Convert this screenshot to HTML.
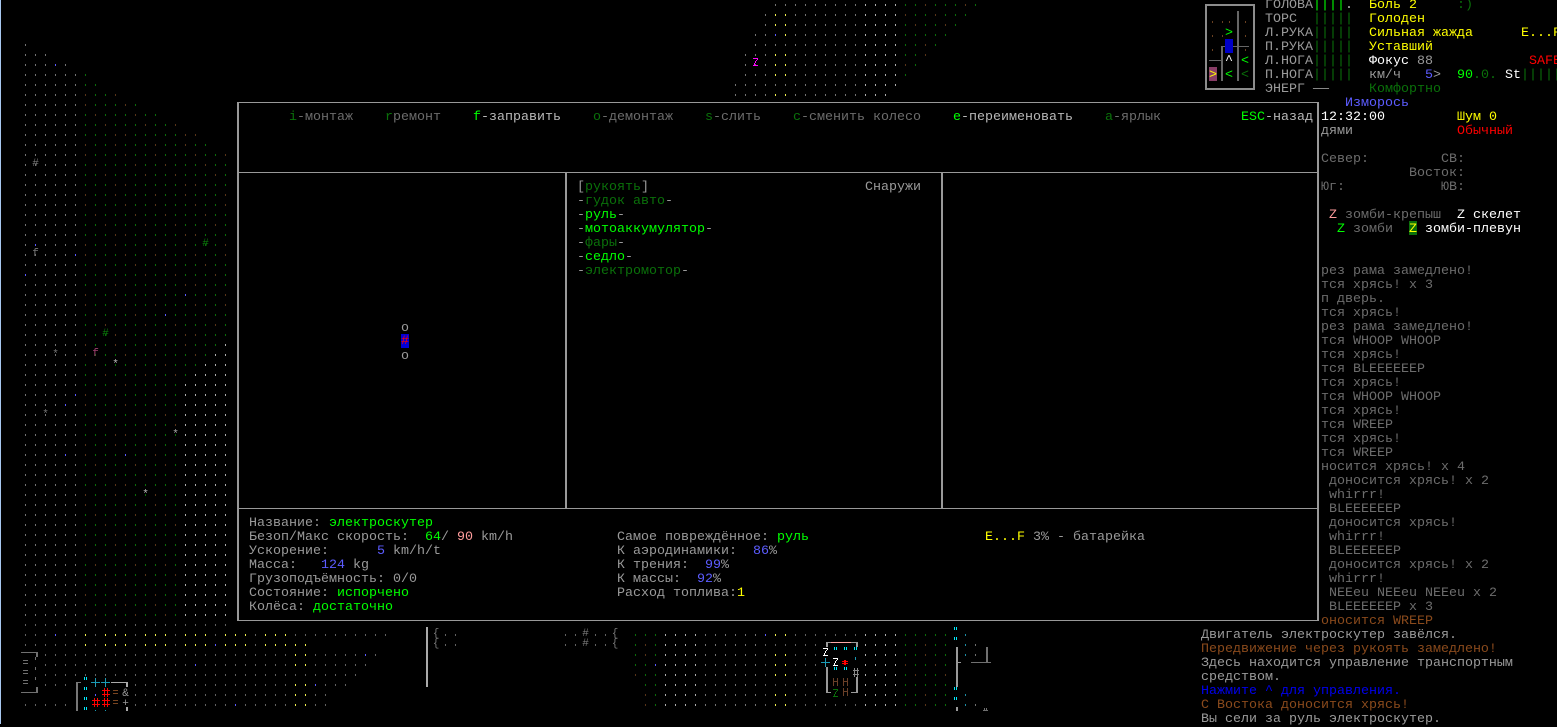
<!DOCTYPE html>
<html lang="ru">
<head>
<meta charset="utf-8">
<title>Cataclysm</title>
<style>
html,body{margin:0;padding:0;background:#000;}
body{width:1557px;height:724px;overflow:hidden;position:relative;font:13.333px/14px "Liberation Mono","DejaVu Sans Mono",monospace;color:#9a9a9a;}
svg{position:absolute;left:0;top:0;}
.l{position:absolute;white-space:pre;height:14px;line-height:14px;margin-top:2px;}
.d{color:#6c6c6c}.m{color:#9a9a9a}.a{color:#b8b8b8}.w{color:#fff}.g{color:#00ff00}.n{color:#0a700a}.y{color:#ffff00}.b{color:#5c5cff}.r{color:#ff0000}.p{color:#ff9c9c}.o{color:#8a4a1c}.u{color:#0000ee}
</style>
</head>
<body>
<svg width="1557" height="724" viewBox="0 0 1557 724" shape-rendering="crispEdges">
<defs>
<pattern id="pG" width="10" height="10" patternUnits="userSpaceOnUse"><rect x="5" y="4" width="1" height="2" fill="#747474"/></pattern>
<pattern id="pD" width="10" height="10" patternUnits="userSpaceOnUse"><rect x="5" y="4" width="1" height="2" fill="#626262"/></pattern>
<pattern id="pL" width="10" height="10" patternUnits="userSpaceOnUse"><rect x="5" y="4" width="1" height="2" fill="#b0b0b0"/></pattern>
<pattern id="pY" width="10" height="10" patternUnits="userSpaceOnUse"><rect x="5" y="4" width="1" height="2" fill="#f4f450"/></pattern>
<pattern id="pB" width="10" height="10" patternUnits="userSpaceOnUse"><rect x="5" y="4" width="1" height="2" fill="#5c5cff"/></pattern>
<pattern id="pC" width="10" height="10" patternUnits="userSpaceOnUse"><rect x="5" y="4" width="1" height="2" fill="#1c8ea8"/></pattern>
<pattern id="pM" width="70" height="50" patternUnits="userSpaceOnUse">
<g fill="#0b6e0b">
<rect x="5" y="4" width="1" height="2"/><rect x="25" y="4" width="1" height="2"/><rect x="35" y="4" width="1" height="2"/><rect x="45" y="4" width="1" height="2"/><rect x="65" y="4" width="1" height="2"/>
<rect x="5" y="14" width="1" height="2"/><rect x="15" y="14" width="1" height="2"/><rect x="35" y="14" width="1" height="2"/><rect x="45" y="14" width="1" height="2"/><rect x="55" y="14" width="1" height="2"/>
<rect x="15" y="24" width="1" height="2"/><rect x="25" y="24" width="1" height="2"/><rect x="45" y="24" width="1" height="2"/><rect x="55" y="24" width="1" height="2"/><rect x="65" y="24" width="1" height="2"/>
<rect x="5" y="34" width="1" height="2"/><rect x="15" y="34" width="1" height="2"/><rect x="25" y="34" width="1" height="2"/><rect x="35" y="34" width="1" height="2"/><rect x="65" y="34" width="1" height="2"/>
<rect x="5" y="44" width="1" height="2"/><rect x="25" y="44" width="1" height="2"/><rect x="35" y="44" width="1" height="2"/><rect x="55" y="44" width="1" height="2"/><rect x="65" y="44" width="1" height="2"/>
</g>
<g fill="#5a3418">
<rect x="15" y="4" width="1" height="2"/><rect x="55" y="4" width="1" height="2"/>
<rect x="25" y="14" width="1" height="2"/><rect x="65" y="14" width="1" height="2"/>
<rect x="5" y="24" width="1" height="2"/><rect x="35" y="24" width="1" height="2"/>
<rect x="45" y="34" width="1" height="2"/><rect x="55" y="34" width="1" height="2"/>
<rect x="15" y="44" width="1" height="2"/><rect x="45" y="44" width="1" height="2"/>
</g>
</pattern>
</defs>

<rect x="0" y="0" width="1" height="724" fill="#a8c8f0"/>

<!-- left map -->
<polygon fill="url(#pG)" points="20,40 30,40 30,50 50,50 50,60 70,60 70,70 80,70 80,630 20,630"/>
<polygon fill="url(#pM)" points="80,70 90,70 90,80 100,80 100,90 120,90 120,100 140,100 140,110 160,110 160,120 180,120 180,130 200,130 200,140 210,140 210,150 230,150 230,620 80,620"/>
<polygon fill="#000" points="220,340 230,340 230,620 180,620 180,380 190,380 190,370 200,370 200,360 210,360 210,350 220,350"/>
<polygon fill="url(#pL)" points="220,340 230,340 230,620 180,620 180,380 190,380 190,370 200,370 200,360 210,360 210,350 220,350"/>
<rect x="80" y="620" width="150" height="10" fill="url(#pG)"/>
<g fill="#5c5cff">
<rect x="55" y="64" width="1" height="2"/><rect x="35" y="244" width="1" height="2"/><rect x="75" y="254" width="1" height="2"/><rect x="25" y="274" width="1" height="2"/><rect x="185" y="294" width="1" height="2"/><rect x="165" y="314" width="1" height="2"/><rect x="75" y="394" width="1" height="2"/><rect x="65" y="404" width="1" height="2"/><rect x="65" y="454" width="1" height="2"/><rect x="125" y="454" width="1" height="2"/>
</g>

<!-- top map -->
<polygon fill="url(#pG)" points="770,0 860,0 860,100 730,100 730,80 740,80 740,50 750,50 750,30 760,30 760,10 770,10"/>
<rect x="860" y="0" width="40" height="90" fill="url(#pL)"/>
<rect x="860" y="90" width="30" height="10" fill="url(#pL)"/>
<polygon fill="url(#pM)" points="900,0 980,0 980,10 970,10 970,20 960,20 960,30 950,30 950,40 940,40 940,50 930,50 930,60 920,60 920,70 910,70 910,80 900,80"/>
<rect x="770" y="10" width="20" height="20" fill="#000"/><rect x="770" y="10" width="20" height="20" fill="url(#pY)"/>
<rect x="770" y="30" width="20" height="10" fill="#000"/><rect x="780" y="30" width="10" height="10" fill="url(#pY)"/><rect x="770" y="30" width="10" height="10" fill="url(#pB)"/>
<rect x="770" y="50" width="20" height="30" fill="#000"/><rect x="770" y="50" width="20" height="30" fill="url(#pY)"/>
<rect x="770" y="90" width="20" height="10" fill="#000"/><rect x="770" y="90" width="20" height="10" fill="url(#pY)"/>

<!-- bottom-left map -->
<g fill="url(#pD)">
<rect x="20" y="620" width="210" height="10"/>
<rect x="20" y="630" width="370" height="10"/>
<rect x="20" y="640" width="290" height="10"/>
<rect x="40" y="650" width="340" height="10"/>
<rect x="40" y="660" width="330" height="10"/>
<rect x="40" y="670" width="320" height="10"/>
<rect x="40" y="680" width="30" height="10"/><rect x="130" y="680" width="220" height="10"/>
<rect x="130" y="690" width="200" height="10"/>
<rect x="20" y="700" width="50" height="10"/><rect x="130" y="700" width="200" height="10"/>
</g>
<rect x="20" y="620" width="210" height="20" fill="#000"/>
<rect x="20" y="620" width="210" height="10" fill="url(#pD)"/>
<rect x="20" y="630" width="370" height="10" fill="#000"/>
<rect x="20" y="630" width="370" height="10" fill="url(#pD)"/>
<g id="ybl">
<rect x="80" y="630" width="10" height="20" fill="#000"/><rect x="80" y="630" width="10" height="20" fill="url(#pY)"/>
<rect x="100" y="630" width="30" height="20" fill="#000"/><rect x="100" y="630" width="30" height="20" fill="url(#pY)"/>
<rect x="140" y="630" width="30" height="20" fill="#000"/><rect x="140" y="630" width="30" height="20" fill="url(#pY)"/>
<rect x="180" y="630" width="30" height="20" fill="#000"/><rect x="180" y="630" width="30" height="20" fill="url(#pY)"/>
<rect x="220" y="630" width="30" height="20" fill="#000"/><rect x="220" y="630" width="30" height="20" fill="url(#pY)"/>
<rect x="260" y="630" width="30" height="20" fill="#000"/><rect x="260" y="630" width="30" height="20" fill="url(#pY)"/>
<rect x="290" y="640" width="20" height="10" fill="#000"/><rect x="290" y="640" width="20" height="10" fill="url(#pY)"/>
<rect x="290" y="650" width="20" height="20" fill="#000"/><rect x="290" y="650" width="20" height="20" fill="url(#pY)"/>
<rect x="290" y="680" width="20" height="30" fill="#000"/><rect x="290" y="680" width="20" height="30" fill="url(#pY)"/>
</g>
<g fill="#5c5cff">
<rect x="55" y="634" width="1" height="2"/><rect x="215" y="644" width="1" height="2"/><rect x="365" y="654" width="1" height="2"/><rect x="195" y="664" width="1" height="2"/><rect x="315" y="684" width="1" height="2"/><rect x="235" y="704" width="1" height="2"/><rect x="95" y="694" width="1" height="2"/>
</g>
<!-- small room bottom left -->
<g fill="#707070">
<rect x="21" y="652" width="16" height="1"/><rect x="36" y="652" width="2" height="5"/>
<rect x="21" y="692" width="16" height="1"/><rect x="36" y="687" width="2" height="6"/>
<rect x="23" y="660" width="5" height="1"/><rect x="23" y="663" width="5" height="1"/>
<rect x="23" y="670" width="5" height="1"/><rect x="23" y="673" width="5" height="1"/>
<rect x="23" y="680" width="5" height="1"/><rect x="23" y="683" width="5" height="1"/>
<rect x="35" y="657" width="1" height="3"/><rect x="35" y="667" width="1" height="3"/><rect x="35" y="677" width="1" height="3"/>
</g>
<!-- building bottom left -->
<g fill="#777">
<rect x="76" y="682" width="2" height="29"/><rect x="76" y="682" width="5" height="1"/>
</g>
<g fill="#aaa"><rect x="111" y="682" width="16" height="1"/><rect x="126" y="682" width="2" height="5"/><rect x="126" y="707" width="2" height="4"/></g>
<g fill="#00e8f8">
<rect x="84" y="677" width="1" height="3"/><rect x="86" y="677" width="1" height="3"/>
<rect x="84" y="687" width="1" height="3"/><rect x="86" y="687" width="1" height="3"/>
<rect x="84" y="697" width="1" height="3"/><rect x="86" y="697" width="1" height="3"/>
<rect x="84" y="707" width="1" height="3"/><rect x="86" y="707" width="1" height="3"/>
</g>
<g fill="#1c9ab4"><rect x="91" y="682" width="9" height="1"/><rect x="95" y="678" width="1" height="9"/><rect x="101" y="682" width="9" height="1"/><rect x="105" y="678" width="1" height="9"/><rect x="95" y="710" width="1" height="1"/><rect x="105" y="710" width="1" height="1"/></g>
<rect x="95" y="694" width="1" height="2" fill="#5c5cff"/>
<g fill="#ff0000"><path d="M104 688h1v9h-1zM107 688h1v9h-1zM102 690h8v1h-8zM102 694h8v1h-8zM94 698h1v9h-1zM97 698h1v9h-1zM92 700h8v1h-8zM92 704h8v1h-8zM104 698h1v9h-1zM107 698h1v9h-1zM102 700h8v1h-8zM102 704h8v1h-8z"/></g>
<g fill="#7a4520"><rect x="113" y="690" width="5" height="1"/><rect x="113" y="693" width="5" height="1"/><rect x="113" y="700" width="5" height="1"/><rect x="113" y="703" width="5" height="1"/></g>
<g font-family="Liberation Mono,monospace" font-size="11" text-anchor="middle" shape-rendering="auto">
<text x="125.500" y="696" fill="#999">&amp;</text>
<text x="125.500" y="706" fill="#999">+</text>
</g>

<!-- bottom-mid map -->
<rect x="426" y="627" width="2" height="60" fill="#aaa"/>
<rect x="440" y="630" width="20" height="20" fill="url(#pD)"/>
<rect x="560" y="630" width="20" height="20" fill="url(#pD)"/>
<rect x="590" y="630" width="20" height="20" fill="url(#pD)"/>
<g font-family="Liberation Mono,monospace" font-size="11" text-anchor="middle" shape-rendering="auto" fill="#777">
<text x="436" y="636">{</text><text x="436" y="646">{</text>
<text x="585.500" y="636">#</text><text x="585.500" y="646">#</text>
<text x="615" y="636">{</text><text x="615" y="646">{</text>
</g>
<rect x="630" y="630" width="30" height="50" fill="url(#pM)"/>
<rect x="640" y="680" width="20" height="30" fill="url(#pM)"/>
<rect x="660" y="630" width="40" height="80" fill="url(#pL)"/>
<rect x="700" y="630" width="60" height="80" fill="url(#pG)"/>
<rect x="760" y="630" width="100" height="80" fill="url(#pD)"/>
<rect x="860" y="630" width="40" height="80" fill="url(#pL)"/>
<rect x="900" y="630" width="50" height="80" fill="url(#pM)"/>
<rect x="770" y="630" width="20" height="10" fill="#000"/><rect x="770" y="630" width="20" height="10" fill="url(#pY)"/>
<rect x="770" y="650" width="20" height="30" fill="#000"/><rect x="770" y="650" width="20" height="30" fill="url(#pY)"/>
<rect x="770" y="690" width="20" height="20" fill="#000"/><rect x="770" y="690" width="20" height="20" fill="url(#pY)"/>
<rect x="760" y="630" width="10" height="10" fill="#000"/><rect x="760" y="630" width="10" height="10" fill="url(#pB)"/>
<rect x="655" y="664" width="1" height="2" fill="#5c5cff"/>

<!-- building bottom -->
<rect x="820" y="640" width="40" height="60" fill="#000"/>
<rect x="826" y="642" width="32" height="1" fill="#999"/>
<rect x="831" y="642" width="20" height="1" fill="#ffa8a8"/>
<g fill="#999"><rect x="826" y="642" width="2" height="5"/><rect x="856" y="642" width="2" height="5"/>
<rect x="826" y="667" width="2" height="26"/><rect x="826" y="692" width="5" height="1"/><rect x="856" y="677" width="2" height="16"/><rect x="851" y="692" width="6" height="1"/></g>
<g fill="#00e8f8">
<path d="M834 647h1v3h-1zM836 647h1v3h-1zM844 647h1v3h-1zM846 647h1v3h-1zM854 647h1v3h-1zM856 647h1v3h-1zM834 667h1v3h-1zM836 667h1v3h-1zM844 667h1v3h-1zM846 667h1v3h-1z"/>
</g>
<rect x="855" y="657" width="1" height="3" fill="#1c9ab4"/>
<path d="M821 662h9v1h-9zM825 658h1v9h-1z" fill="#1c9ab4"/>
<g fill="#fff"><path d="M823 648h5v1h-5zM827 649h1v1h-1zM826 650h1v1h-1zM825 651h1v2h-1zM824 653h1v2h-1zM823 655h5v1h-5z M833 658h5v1h-5zM837 659h1v1h-1zM836 660h1v1h-1zM835 661h1v2h-1zM834 663h1v2h-1zM833 665h5v1h-5z"/></g>
<path d="M833 689h5v1h-5zM837 690h1v1h-1zM836 691h1v1h-1zM835 692h1v2h-1zM834 694h1v2h-1zM833 696h5v1h-5z" fill="#0a700a"/>
<g fill="#ff0000"><path d="M844 660h2v5h-2zM842 661h6v1h-6zM842 663h6v1h-6z"/></g>
<path d="M854 668h1v9h-1zM857 668h1v9h-1zM853 670h6v1h-6zM853 674h6v1h-6z" fill="#888"/>
<g fill="#6a4028"><path d="M833 678h1v8h-1zM837 678h1v8h-1zM833 681h5v1h-5zM843 678h1v8h-1zM847 678h1v8h-1zM843 681h5v1h-5zM843 688h1v8h-1zM847 688h1v8h-1zM843 691h5v1h-5z"/></g>

<!-- east structures -->
<g fill="#00e8f8"><path d="M954 627h1v3h-1zM956 627h1v3h-1zM954 637h1v3h-1zM956 637h1v3h-1zM954 687h1v3h-1zM956 687h1v3h-1zM954 697h1v3h-1zM956 697h1v3h-1z"/></g>
<rect x="956" y="647" width="2" height="40" fill="#999"/>
<rect x="958" y="662" width="3" height="1" fill="#999"/>
<rect x="956" y="707" width="2" height="4" fill="#999"/>
<rect x="971" y="662" width="20" height="1" fill="#707070"/>
<rect x="986" y="647" width="2" height="15" fill="#707070"/>
<rect x="983" y="710" width="5" height="1" fill="#707070"/><rect x="984" y="708" width="1" height="2" fill="#707070"/><rect x="986" y="708" width="1" height="2" fill="#707070"/>
<g fill="#1c8ea8"><rect x="965" y="634" width="1" height="2"/><rect x="965" y="644" width="1" height="2"/><rect x="965" y="654" width="1" height="2"/><rect x="965" y="694" width="1" height="2"/><rect x="965" y="704" width="1" height="2"/></g>
<g fill="#707070"><rect x="975" y="644" width="1" height="2"/><rect x="975" y="654" width="1" height="2"/><rect x="975" y="704" width="1" height="2"/></g>

<!-- map glyphs -->
<g font-family="Liberation Mono,monospace" font-size="11" text-anchor="middle" shape-rendering="auto">
<text x="35.500" y="166" fill="#777">#</text>
<text x="205.500" y="246" fill="#0a7a0a">#</text>
<text x="35.500" y="256" fill="#777">f</text>
<text x="105.500" y="336" fill="#0a7a0a">#</text>
<text x="55.500" y="357" fill="#777">*</text>
<text x="95.500" y="356" fill="#a04070">f</text>
<text x="115.500" y="367" fill="#bbb">*</text>
<text x="45.500" y="417" fill="#777">*</text>
<text x="175.500" y="437" fill="#aaa">*</text>
<text x="145.500" y="497" fill="#bbb">*</text>
</g>
<path d="M753 58h5v1h-5zM757 59h1v1h-1zM756 60h1v1h-1zM755 61h1v2h-1zM754 63h1v2h-1zM753 65h5v1h-5z" fill="#ff00ff"/>

<!-- overlay frame -->
<g fill="#999">
<rect x="237" y="102" width="1082" height="1"/>
<rect x="237" y="172" width="1082" height="1"/>
<rect x="237" y="508" width="1082" height="1"/>
<rect x="237" y="620" width="1082" height="1"/>
<rect x="237" y="102" width="2" height="519"/>
<rect x="1317" y="102" width="2" height="519"/>
<rect x="565" y="172" width="2" height="337"/>
<rect x="941" y="172" width="2" height="337"/>
</g>

<!-- overlay vehicle -->
<rect x="401" y="334" width="8" height="14" fill="#0000d8"/>

<!-- minimap -->
<rect x="1206" y="5" width="48" height="84" fill="none" stroke="#8c8c8c" stroke-width="2"/>
<g fill="#666">
<rect x="1237" y="11" width="2" height="70"/>
<rect x="1221" y="46" width="28" height="1"/>
<rect x="1221" y="46" width="2" height="35"/>
<rect x="1209" y="60" width="12" height="1"/>
</g>
<rect x="1225" y="39" width="8" height="14" fill="#0000c8"/>
<rect x="1209" y="67" width="8" height="14" fill="#883d66"/>
<g fill="#6a4020">
<rect x="1212" y="21" width="1" height="2"/><rect x="1222" y="21" width="1" height="2"/><rect x="1229" y="21" width="1" height="2"/><rect x="1245" y="21" width="1" height="2"/>
<rect x="1212" y="35" width="1" height="2"/><rect x="1222" y="35" width="1" height="2"/><rect x="1245" y="35" width="1" height="2"/>
<rect x="1212" y="49" width="1" height="2"/><rect x="1245" y="49" width="1" height="2"/>
</g>
</svg>

<!-- overlay top buttons -->
<div class="l d" style="left:289px;top:109px"><span class="n">i</span>-монтаж</div>
<div class="l d" style="left:385px;top:109px"><span class="n">r</span>ремонт</div>
<div class="l a" style="left:473px;top:109px"><span class="g">f</span>-заправить</div>
<div class="l d" style="left:593px;top:109px"><span class="n">o</span>-демонтаж</div>
<div class="l d" style="left:705px;top:109px"><span class="n">s</span>-слить</div>
<div class="l d" style="left:793px;top:109px"><span class="n">c</span>-сменить колесо</div>
<div class="l a" style="left:953px;top:109px"><span class="g">e</span>-переименовать</div>
<div class="l d" style="left:1105px;top:109px"><span class="n">a</span>-ярлык</div>
<div class="l a" style="left:1241px;top:109px"><span class="g">ESC</span>-назад</div>

<!-- parts list -->
<div class="l m" style="left:577px;top:179px">[<span class="n">рукоять</span>]</div>
<div class="l m" style="left:865px;top:179px">Снаружи</div>
<div class="l m" style="left:577px;top:193px">-<span class="n">гудок авто</span>-</div>
<div class="l m" style="left:577px;top:207px">-<span class="g">руль</span>-</div>
<div class="l m" style="left:577px;top:221px">-<span class="g">мотоаккумулятор</span>-</div>
<div class="l m" style="left:577px;top:235px">-<span class="n">фары</span>-</div>
<div class="l m" style="left:577px;top:249px">-<span class="g">седло</span>-</div>
<div class="l m" style="left:577px;top:263px">-<span class="n">электромотор</span>-</div>

<!-- vehicle glyphs -->
<div class="l m" style="left:401px;top:320px">o</div>
<div class="l r" style="left:401px;top:334px;margin-top:1px">#</div>
<div class="l m" style="left:401px;top:348px">o</div>

<!-- info -->
<div class="l m" style="left:249px;top:515px">Название: <span class="g">электроскутер</span></div>
<div class="l m" style="left:249px;top:529px">Безоп/Макс скорость:  <span class="g">64</span>/ <span class="p">90</span> km/h</div>
<div class="l m" style="left:249px;top:543px">Ускорение:      <span class="b">5</span> km/h/t</div>
<div class="l m" style="left:249px;top:557px">Масса:   <span class="b">124</span> kg</div>
<div class="l m" style="left:249px;top:571px">Грузоподъёмность: 0/0</div>
<div class="l m" style="left:249px;top:585px">Состояние: <span class="g">испорчено</span></div>
<div class="l m" style="left:249px;top:599px">Колёса: <span class="g">достаточно</span></div>
<div class="l m" style="left:617px;top:529px">Самое повреждённое: <span class="g">руль</span></div>
<div class="l m" style="left:617px;top:543px">К аэродинамики:  <span class="b">86</span>%</div>
<div class="l m" style="left:617px;top:557px">К трения:  <span class="b">99</span>%</div>
<div class="l m" style="left:617px;top:571px">К массы:  <span class="b">92</span>%</div>
<div class="l m" style="left:617px;top:585px">Расход топлива:<span class="y">1</span></div>
<div class="l m" style="left:985px;top:529px"><span class="y">E...F</span> 3% - батарейка</div>

<!-- sidebar -->
<div class="l m" style="left:1265px;top:-3px">ГОЛОВА<span class="g">||||</span><span class="a">.</span></div>
<div class="l m" style="left:1265px;top:11px">ТОРС  <span class="n">|||||</span></div>
<div class="l m" style="left:1265px;top:25px">Л.РУКА<span class="n">|||||</span></div>
<div class="l m" style="left:1265px;top:39px">П.РУКА<span class="n">|||||</span></div>
<div class="l m" style="left:1265px;top:53px">Л.НОГА<span class="n">|||||</span></div>
<div class="l m" style="left:1265px;top:67px">П.НОГА<span class="n">|||||</span></div>
<div class="l m" style="left:1265px;top:81px">ЭНЕРГ ——</div>
<div class="l y" style="left:1369px;top:-3px">Боль 2</div>
<div class="l n" style="left:1457px;top:-3px">:)</div>
<div class="l y" style="left:1369px;top:11px">Голоден</div>
<div class="l y" style="left:1369px;top:25px">Сильная жажда</div>
<div class="l y" style="left:1521px;top:25px">E...F</div>
<div class="l y" style="left:1369px;top:39px">Уставший</div>
<div class="l w" style="left:1369px;top:53px">Фокус <span class="m">88</span></div>
<div class="l r" style="left:1529px;top:53px">SAFE</div>
<div class="l m" style="left:1369px;top:67px">км/ч</div>
<div class="l b" style="left:1425px;top:67px">5<span class="m">&gt;</span></div>
<div class="l g" style="left:1457px;top:67px">90<span class="n">.0.</span></div>
<div class="l w" style="left:1505px;top:67px">St<span class="n">|||||</span></div>
<div class="l n" style="left:1369px;top:81px">Комфортно</div>
<div class="l b" style="left:1345px;top:95px">Изморось</div>
<div class="l w" style="left:1321px;top:109px">12:32:00</div>
<div class="l y" style="left:1457px;top:109px">Шум 0</div>
<div class="l m" style="left:1321px;top:123px">дями</div>
<div class="l r" style="left:1457px;top:123px">Обычный</div>
<div class="l d" style="left:1321px;top:151px">Север:</div>
<div class="l d" style="left:1441px;top:151px">СВ:</div>
<div class="l d" style="left:1409px;top:165px">Восток:</div>
<div class="l d" style="left:1321px;top:179px">Юг:</div>
<div class="l d" style="left:1441px;top:179px">ЮВ:</div>
<div class="l p" style="left:1329px;top:207px">Z</div>
<div class="l d" style="left:1345px;top:207px">зомби-крепыш</div>
<div class="l w" style="left:1457px;top:207px">Z скелет</div>
<div class="l g" style="left:1337px;top:221px">Z</div>
<div class="l d" style="left:1353px;top:221px">зомби</div>
<div class="l y" style="left:1409px;top:221px;margin-top:0;line-height:18px;overflow:hidden;background:#0a700a">Z</div>
<div class="l w" style="left:1425px;top:221px">зомби-плевун</div>

<!-- minimap glyphs -->
<div class="l g" style="left:1225px;top:25px">&gt;</div>
<div class="l w" style="left:1225px;top:53px">^</div>
<div class="l g" style="left:1241px;top:53px">&lt;</div>
<div class="l g" style="left:1225px;top:67px">&lt;</div>
<div class="l n" style="left:1241px;top:67px">&lt;</div>
<div class="l y" style="left:1209px;top:67px">&gt;</div>

<!-- log -->
<div class="l d" style="left:1321px;top:263px">рез рама замедлено!</div>
<div class="l d" style="left:1321px;top:277px">тся хрясь! x 3</div>
<div class="l d" style="left:1321px;top:291px">п дверь.</div>
<div class="l d" style="left:1321px;top:305px">тся хрясь!</div>
<div class="l d" style="left:1321px;top:319px">рез рама замедлено!</div>
<div class="l d" style="left:1321px;top:333px">тся WHOOP WHOOP</div>
<div class="l d" style="left:1321px;top:347px">тся хрясь!</div>
<div class="l d" style="left:1321px;top:361px">тся BLEEEEEEP</div>
<div class="l d" style="left:1321px;top:375px">тся хрясь!</div>
<div class="l d" style="left:1321px;top:389px">тся WHOOP WHOOP</div>
<div class="l d" style="left:1321px;top:403px">тся хрясь!</div>
<div class="l d" style="left:1321px;top:417px">тся WREEP</div>
<div class="l d" style="left:1321px;top:431px">тся хрясь!</div>
<div class="l d" style="left:1321px;top:445px">тся WREEP</div>
<div class="l d" style="left:1321px;top:459px">носится хрясь! x 4</div>
<div class="l d" style="left:1329px;top:473px">доносится хрясь! x 2</div>
<div class="l d" style="left:1329px;top:487px">whirrr!</div>
<div class="l d" style="left:1329px;top:501px">BLEEEEEEP</div>
<div class="l d" style="left:1329px;top:515px">доносится хрясь!</div>
<div class="l d" style="left:1329px;top:529px">whirrr!</div>
<div class="l d" style="left:1329px;top:543px">BLEEEEEEP</div>
<div class="l d" style="left:1329px;top:557px">доносится хрясь! x 2</div>
<div class="l d" style="left:1329px;top:571px">whirrr!</div>
<div class="l d" style="left:1329px;top:585px">NEEeu NEEeu NEEeu x 2</div>
<div class="l d" style="left:1329px;top:599px">BLEEEEEEP x 3</div>
<div class="l o" style="left:1321px;top:613px">оносится WREEP</div>
<div class="l m" style="left:1201px;top:627px">Двигатель электроскутер завёлся.</div>
<div class="l o" style="left:1201px;top:641px">Передвижение через рукоять замедлено!</div>
<div class="l m" style="left:1201px;top:655px">Здесь находится управление транспортным</div>
<div class="l m" style="left:1201px;top:669px">средством.</div>
<div class="l u" style="left:1201px;top:683px">Нажмите ^ для управления.</div>
<div class="l o" style="left:1201px;top:697px">С Востока доносится хрясь!</div>
<div class="l m" style="left:1201px;top:711px">Вы сели за руль электроскутер.</div>
</body>
</html>
